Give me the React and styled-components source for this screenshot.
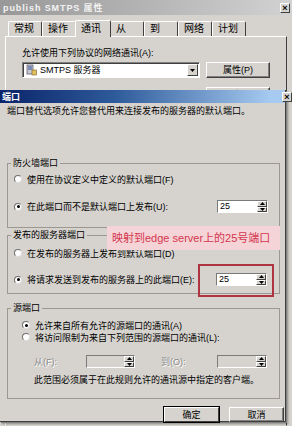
import React from "react";
import styled, { createGlobalStyle } from "styled-components";

const GlobalStyle = createGlobalStyle`
  html, body {
    margin: 0;
    padding: 0;
    background: #d6d3ce;
  }
  body {
    width: 292px;
    height: 426px;
    overflow: hidden;
    font-family: "Liberation Sans", "Noto Sans CJK SC", sans-serif;
    font-size: 9px;
    color: #000;
  }
`;

const Desktop = styled.div`
  position: relative;
  width: 292px;
  height: 426px;
  overflow: hidden;
`;

/* ---------- back window (properties) ---------- */

const BackWindow = styled.div`
  display: flex;
  flex-direction: column;
  width: 292px;
  height: 426px;
  background: #d6d3ce;
`;

const BackTitle = styled.div`
  height: 15px;
  display: flex;
  align-items: center;
  padding: 0 1px 0 3px;
  background: linear-gradient(90deg, #989898, #b4b4b4 50%, #d2d2d2);
  color: #f2f2f2;
  font-weight: bold;
  font-size: 9px;
  letter-spacing: 0.9px;
`;

const TitleText = styled.span`
  flex: 1;
`;

const CloseBox = styled.span`
  flex: none;
  width: 10px;
  height: 10px;
  box-sizing: border-box;
  background: #d6d3ce;
  border: 1px solid;
  border-color: #fff #404040 #404040 #fff;
  display: flex;
  align-items: center;
  justify-content: center;
  color: #000;
  font-size: 9px;
  font-weight: bold;
  letter-spacing: 0;
  line-height: 8px;
  margin-right: ${(p) => p.$mr || 0}px;
`;

const TabStrip = styled.div`
  display: flex;
  align-items: flex-end;
  height: 17px;
  margin-top: 4px;
  padding-left: 8px;
`;

const Tab = styled.div`
  position: relative;
  width: ${(p) => (p.$active ? 36 : 34)}px;
  height: ${(p) => (p.$active ? 17 : 15)}px;
  box-sizing: border-box;
  margin: ${(p) => (p.$active ? "0 -1px -1px -1px" : "0")};
  z-index: ${(p) => (p.$active ? 1 : 0)};
  border: 1px solid;
  border-color: #fff #404040 transparent #fff;
  border-bottom: none;
  border-radius: 2px 2px 0 0;
  background: #d6d3ce;
  padding: ${(p) => (p.$active ? 2 : 1)}px 0 0 5px;
  font-size: 10px;
  line-height: 12px;
`;

const TabPanel = styled.div`
  flex: 1;
  margin: 0 5px 0 5px;
  border: 1px solid;
  border-color: #fff #404040 transparent #fff;
  padding: 10px 0 0 16px;
`;

const Line = styled.div`
  height: 12px;
  line-height: 12px;
  white-space: nowrap;
  color: ${(p) => (p.$disabled ? "#8a8a8a" : "#000")};
  text-shadow: ${(p) => (p.$disabled ? "1px 1px 0 #fff" : "none")};
`;

const ComboRow = styled.div`
  display: flex;
  align-items: flex-start;
  margin-top: 3px;
`;

const Combo = styled.div`
  width: 178px;
  height: 16px;
  box-sizing: border-box;
  display: flex;
  align-items: center;
  background: #fff;
  border: 1px solid;
  border-color: #808080 #fff #fff #808080;
  box-shadow: inset 1px 1px 0 #404040;
  padding: 0 1px 0 3px;
  gap: 3px;
`;

const ComboText = styled.span`
  flex: 1;
  font-size: 9px;
  line-height: 12px;
`;

const DropButton = styled.span`
  width: 11px;
  height: 12px;
  box-sizing: border-box;
  border: 1px solid;
  border-color: #fff #404040 #404040 #fff;
  background: #d6d3ce;
  display: flex;
  align-items: center;
  justify-content: center;
`;

const ButtonColumn = styled.div`
  display: flex;
  flex-direction: column;
  gap: 9px;
  margin-left: 6px;
`;

const Button = styled.div`
  width: ${(p) => p.$w || 55}px;
  height: ${(p) => p.$h || 15}px;
  box-sizing: border-box;
  display: flex;
  align-items: center;
  justify-content: center;
  background: #d6d3ce;
  border: 1px solid;
  border-color: #fff #404040 #404040 #fff;
  box-shadow: ${(p) => (p.$default ? "0 0 0 1px #000" : "inset -1px -1px 0 #808080")};
  font-size: 9px;
  line-height: 12px;
`;

/* ---------- front dialog (port) ---------- */

const Dialog = styled.div`
  position: absolute;
  left: 0;
  top: 90px;
  width: 286px;
  height: 332px;
  box-sizing: border-box;
  display: flex;
  flex-direction: column;
  background: #d6d3ce;
  border-right: 1px solid #404040;
  border-bottom: 1px solid #404040;
  box-shadow: 1px 1px 0 #808080, 2px 2px 2px rgba(0, 0, 0, 0.35);
`;

const DialogTitle = styled.div`
  height: 13px;
  display: flex;
  align-items: center;
  padding-left: 2px;
  background: linear-gradient(90deg, #0a246a, #2e5a9a 40%, #a6caf0 95%);
  color: #fff;
  font-weight: bold;
  font-size: 9px;
`;

const Description = styled(Line)`
  margin-top: 2px;
  padding-left: 7px;
`;

const Group = styled.fieldset`
  width: 273px;
  box-sizing: border-box;
  margin: ${(p) => p.$mt}px 0 0 7px;
  padding: ${(p) => p.$pt}px 0 ${(p) => p.$pb}px 0;
  border: 1px solid #9c9891;
  display: flex;
  flex-direction: column;
  gap: ${(p) => p.$gap || 0}px;
  min-width: 0;
`;

const Legend = styled.legend`
  margin-left: 3px;
  padding: 0 2px;
  font-size: 9px;
  line-height: 12px;
`;

const Option = styled.div`
  display: flex;
  align-items: center;
  height: ${(p) => p.$h || 12}px;
  padding-left: ${(p) => p.$indent || 6}px;
  white-space: nowrap;
`;

const Radio = styled.span`
  flex: none;
  width: 8px;
  height: 8px;
  box-sizing: border-box;
  margin-right: 5px;
  border-radius: 50%;
  background: #fff;
  border: 1px solid;
  border-color: #6f6f6f #dcdcdc #dcdcdc #6f6f6f;
  display: flex;
  align-items: center;
  justify-content: center;

  &::after {
    content: "";
    width: 3px;
    height: 3px;
    border-radius: 50%;
    background: ${(p) => (p.$checked ? "#000" : "transparent")};
  }
`;

const Spin = styled.div`
  flex: none;
  display: flex;
  width: ${(p) => p.$w || 51}px;
  height: 13px;
  box-sizing: border-box;
  margin-left: ${(p) => (p.$ml === undefined ? "auto" : `${p.$ml}px`)};
  margin-right: ${(p) => p.$mr || 0}px;
  border: 1px solid;
  border-color: #7a7a7a #fff #fff #7a7a7a;
  background: ${(p) => (p.$disabled ? "#d6d3ce" : "#fff")};
`;

const SpinValue = styled.span`
  flex: 1;
  padding-left: 2px;
  font-size: 9px;
  line-height: 11px;
`;

const SpinButtons = styled.div`
  width: 10px;
  display: flex;
  flex-direction: column;
`;

const SpinButton = styled.span`
  flex: 1;
  box-sizing: border-box;
  background: #d6d3ce;
  border: 1px solid;
  border-color: #fff #404040 #404040 #fff;
  display: flex;
  align-items: center;
  justify-content: center;
`;

const RangeRow = styled.div`
  display: flex;
  align-items: center;
  height: 13px;
  margin-top: 12px;
  padding-left: 26px;
`;

const RangeLabel = styled(Line)`
  flex: none;
  width: ${(p) => p.$w}px;
  margin-left: ${(p) => p.$ml || 0}px;
`;

const Note = styled(Line)`
  margin-top: 6px;
  padding-left: 26px;
`;

const ButtonRow = styled.div`
  display: flex;
  justify-content: flex-end;
  gap: 10px;
  margin-top: 8px;
  padding-right: 1px;
`;

const Callout = styled.div`
  position: absolute;
  left: 107px;
  top: 136px;
  width: 173px;
  height: 24px;
  box-sizing: border-box;
  padding-left: 5px;
  background: #f5d4d7;
  color: #d4344e;
  font-family: "Liberation Sans", "Noto Sans CJK SC", sans-serif;
  font-size: 11px;
  line-height: 24px;
  white-space: nowrap;
`;

const Highlight = styled.div`
  position: absolute;
  left: 198px;
  top: 174px;
  width: 76px;
  height: 33px;
  box-sizing: border-box;
  border: 2px solid #ae3540;
`;

function Arrow({ up }) {
  return (
    <svg width="5" height="3" viewBox="0 0 5 3">
      <path d={up ? "M0 3 L2.5 0 L5 3 Z" : "M0 0 L5 0 L2.5 3 Z"} fill="#000" />
    </svg>
  );
}

function SpinBox({ value, ...rest }) {
  return (
    <Spin {...rest}>
      <SpinValue>{value}</SpinValue>
      <SpinButtons>
        <SpinButton>
          <Arrow up />
        </SpinButton>
        <SpinButton>
          <Arrow />
        </SpinButton>
      </SpinButtons>
    </Spin>
  );
}

function ServerIcon() {
  return (
    <svg width="11" height="12" viewBox="0 0 11 12">
      <rect x="1" y="1" width="6" height="9" fill="#c8c8d0" stroke="#606070" strokeWidth="0.8" />
      <rect x="2" y="2.5" width="4" height="1" fill="#3050a0" />
      <rect x="2" y="4.5" width="4" height="1" fill="#3050a0" />
      <rect x="6" y="6" width="4.5" height="5" fill="#e0c060" stroke="#806020" strokeWidth="0.6" />
    </svg>
  );
}

const tabs = ["常规", "操作", "通讯", "从", "到", "网络", "计划"];

function App() {
  return (
    <Desktop>
      <GlobalStyle />
      <BackWindow>
        <BackTitle>
          <TitleText>publish SMTPS 属性</TitleText>
          <CloseBox $mr={1}>×</CloseBox>
        </BackTitle>
        <TabStrip>
          {tabs.map((t) => (
            <Tab key={t} $active={t === "通讯"}>
              {t}
            </Tab>
          ))}
        </TabStrip>
        <TabPanel>
          <Line>允许使用下列协议的网络通讯(A):</Line>
          <ComboRow>
            <Combo>
              <ServerIcon />
              <ComboText>SMTPS 服务器</ComboText>
              <DropButton>
                <Arrow />
              </DropButton>
            </Combo>
            <ButtonColumn>
              <Button $w={64} $h={16}>属性(P)</Button>
              <Button $w={64} $h={16}>新建(N)</Button>
            </ButtonColumn>
          </ComboRow>
        </TabPanel>
      </BackWindow>

      <Dialog>
        <DialogTitle>
          <TitleText>端口</TitleText>
          <CloseBox $mr={-7}>×</CloseBox>
        </DialogTitle>
        <Description>端口替代选项允许您替代用来连接发布的服务器的默认端口。</Description>

        <Group $mt={40} $pt={4} $pb={14} $gap={15}>
          <Legend>防火墙端口</Legend>
          <Option>
            <Radio />
            使用在协议定义中定义的默认端口(F)
          </Option>
          <Option $h={13}>
            <Radio $checked />
            在此端口而不是默认端口上发布(U):
            <SpinBox value="25" $mr={11} />
          </Option>
        </Group>

        <Group $mt={1} $pt={6} $pb={7} $gap={14}>
          <Legend>发布的服务器端口</Legend>
          <Option>
            <Radio />
            在发布的服务器上发布到默认端口(D)
          </Option>
          <Option $h={13}>
            <Radio $checked />
            将请求发送到发布的服务器上的此端口(E):
            <SpinBox value="25" $mr={12} />
          </Option>
        </Group>

        <Group $mt={8} $pt={5} $pb={12}>
          <Legend>源端口</Legend>
          <Option $indent={14}>
            <Radio $checked />
            允许来自所有允许的源端口的通讯(A)
          </Option>
          <Option $indent={14}>
            <Radio />
            将访问限制为来自下列范围的源端口的通讯(L):
          </Option>
          <RangeRow>
            <RangeLabel $w={52} $disabled>从(F):</RangeLabel>
            <SpinBox value="" $w={49} $ml={0} $disabled />
            <RangeLabel $w={56} $ml={26} $disabled>到(O):</RangeLabel>
            <SpinBox value="" $w={50} $ml={0} $disabled />
          </RangeRow>
          <Note>此范围必须属于在此规则允许的通讯源中指定的客户端。</Note>
        </Group>

        <ButtonRow>
          <Button $default>确定</Button>
          <Button>取消</Button>
        </ButtonRow>

        <Callout>映射到edge server上的25号端口</Callout>
        <Highlight />
      </Dialog>
    </Desktop>
  );
}

export default App;
